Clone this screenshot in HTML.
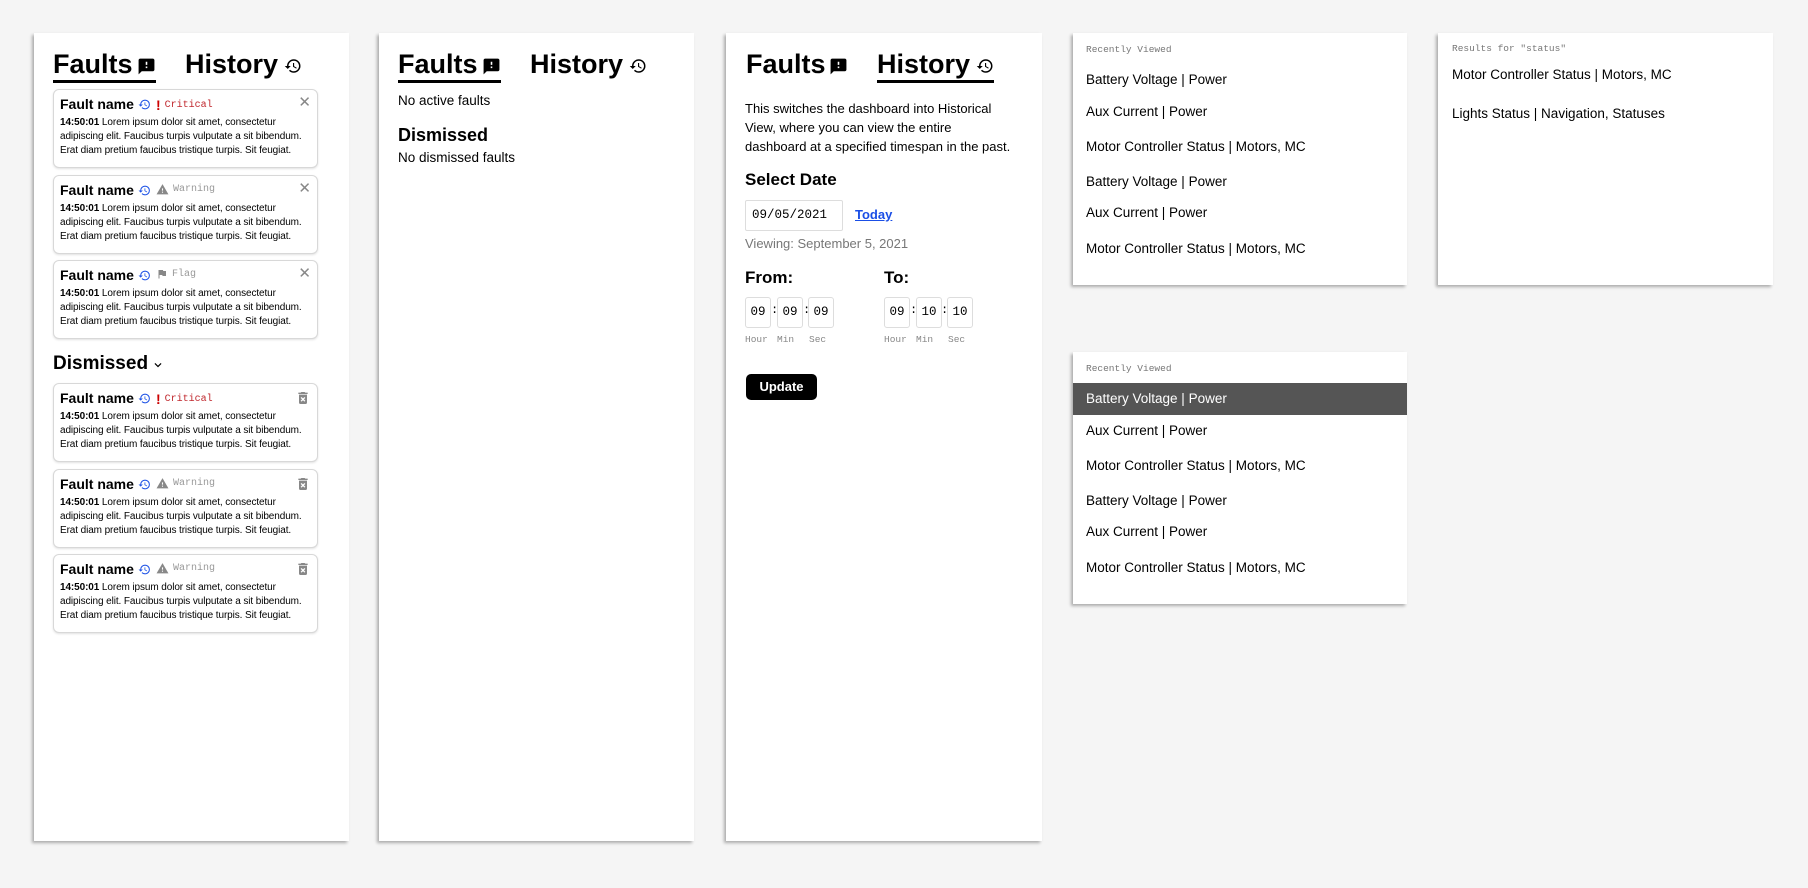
<!DOCTYPE html>
<html><head><meta charset="utf-8"><style>
*{margin:0;padding:0;box-sizing:border-box}
body{width:1808px;height:888px;background:#f5f5f5;position:relative;overflow:hidden;font-family:"Liberation Sans",sans-serif;color:#000}
.p{position:absolute;background:#fff;box-shadow:-2px 2px 3px rgba(0,0,0,.3)}
.a{position:absolute;white-space:nowrap}
.h{font-size:27px;font-weight:bold;line-height:32px}
.ul{position:absolute;height:3px;background:#000}
.card{position:absolute;left:53px;width:265px;height:79px;border:1px solid #d8d8d8;border-radius:6px;box-shadow:0 1px 2px rgba(0,0,0,.12);background:#fff}
.card .t{position:absolute;left:6px;top:6px;font-size:14px;font-weight:bold}
.card .b{position:absolute;left:6px;top:26px;width:256px;font-size:10px;line-height:14px;letter-spacing:-0.1px}
.card .hi{position:absolute;left:84px;top:8px}
.card .tag{position:absolute;left:102px;top:7px;font-family:"Liberation Mono",monospace;font-size:10px;display:flex;align-items:center;gap:4px}
.card .x{position:absolute;right:6px;top:3px;color:#888;font-size:15px}
.card .tr{position:absolute;right:6px;top:6px}
.mono{font-family:"Liberation Mono",monospace}
.row{position:absolute;left:13px;font-size:13.5px}
.lab{position:absolute;left:13px;font-family:"Liberation Mono",monospace;font-size:9.5px;color:#777}
.tb{position:absolute;top:297px;width:26px;height:31px;border:1px solid #ddd;border-radius:3px;font-family:"Liberation Mono",monospace;font-size:12.5px;text-align:center;line-height:29px}
.col{position:absolute;top:303px;font-family:"Liberation Mono",monospace;font-size:12px}
.tl{position:absolute;top:334px;font-family:"Liberation Mono",monospace;font-size:9.5px;color:#888}
</style></head><body>
<svg width="0" height="0" style="position:absolute"><defs>
<symbol id="hist" viewBox="0 0 24 24"><path d="M13 3a9 9 0 0 0-9 9H1l3.89 3.89.07.14L9 12H6c0-3.870 3.130-7 7-7s7 3.130 7 7-3.130 7-7 7c-1.930 0-3.680-.790-4.940-2.060l-1.420 1.420A8.954 8.954 0 0 0 13 21a9 9 0 0 0 0-18zm-1 5v5l4.280 2.540.720-1.210-3.500-2.080V8H12z"/></symbol>
<symbol id="fb" viewBox="0 0 24 24"><path d="M20 2H4c-1.1 0-1.990.9-1.990 2L2 22l4-4h14c1.1 0 2-.9 2-2V4c0-1.1-.9-2-2-2zm-7 12h-2v-2h2v2zm0-4h-2V6h2v4z"/></symbol>
<symbol id="warn" viewBox="0 0 24 24"><path d="M1 21h22L12 2 1 21zm12-3h-2v-2h2v2zm0-4h-2v-4h2v4z"/></symbol>
<symbol id="flag" viewBox="0 0 24 24"><path d="M14.4 6L14 4H5v17h2v-7h5.6l.4 2h7V6z"/></symbol>
<symbol id="del" viewBox="0 0 24 24"><path d="M6 19c0 1.1.9 2 2 2h8c1.1 0 2-.9 2-2V7H6v12zm2.460-7.120l1.410-1.410L12 12.590l2.120-2.120 1.410 1.410L13.410 14l2.120 2.120-1.410 1.410L12 15.410l-2.120 2.120-1.410-1.410L10.590 14l-2.130-2.120zM15.500 4l-1-1h-5l-1 1H5v2h14V4z"/></symbol>
</defs></svg>

<!-- Panel 1 -->
<div class="p" style="left:34px;top:33px;width:315px;height:808px"></div>
<div class="a h" style="left:53px;top:48px">Faults</div>
<svg class="a" style="left:137px;top:57px" width="19" height="19"><use href="#fb"/></svg>
<div class="ul" style="left:53px;top:80px;width:103px"></div>
<div class="a h" style="left:185px;top:48px">History</div>
<svg class="a" style="left:284px;top:57px" width="18" height="18"><use href="#hist"/></svg>

<div class="card" style="top:89px"><div class="t">Fault name</div><svg class="hi" width="13" height="13" fill="#2155e6"><use href="#hist"/></svg><div class="tag" style="color:#c0272d"><b style="font-family:'Liberation Sans';font-size:14px;color:#c00">!</b>Critical</div><div class="x">✕</div><div class="b"><b>14:50:01</b> Lorem ipsum dolor sit amet, consectetur adipiscing elit. Faucibus turpis vulputate a sit bibendum. Erat diam pretium faucibus tristique turpis. Sit feugiat.</div></div>
<div class="card" style="top:175px"><div class="t">Fault name</div><svg class="hi" width="13" height="13" fill="#2155e6"><use href="#hist"/></svg><div class="tag" style="color:#999"><svg width="13" height="13" fill="#888"><use href="#warn"/></svg>Warning</div><div class="x">✕</div><div class="b"><b>14:50:01</b> Lorem ipsum dolor sit amet, consectetur adipiscing elit. Faucibus turpis vulputate a sit bibendum. Erat diam pretium faucibus tristique turpis. Sit feugiat.</div></div>
<div class="card" style="top:260px"><div class="t">Fault name</div><svg class="hi" width="13" height="13" fill="#2155e6"><use href="#hist"/></svg><div class="tag" style="color:#999"><svg width="12" height="12" fill="#888"><use href="#flag"/></svg>Flag</div><div class="x">✕</div><div class="b"><b>14:50:01</b> Lorem ipsum dolor sit amet, consectetur adipiscing elit. Faucibus turpis vulputate a sit bibendum. Erat diam pretium faucibus tristique turpis. Sit feugiat.</div></div>

<div class="a" style="left:53px;top:353px;font-size:19px;font-weight:bold">Dismissed</div>
<svg class="a" style="left:151px;top:358px" width="14" height="14" viewBox="0 0 24 24"><path d="M7.41 8.59L12 13.17l4.59-4.58L18 10l-6 6-6-6z"/></svg>

<div class="card" style="top:383px"><div class="t">Fault name</div><svg class="hi" width="13" height="13" fill="#2155e6"><use href="#hist"/></svg><div class="tag" style="color:#c0272d"><b style="font-family:'Liberation Sans';font-size:14px;color:#c00">!</b>Critical</div><svg class="tr" width="16" height="16" fill="#888"><use href="#del"/></svg><div class="b"><b>14:50:01</b> Lorem ipsum dolor sit amet, consectetur adipiscing elit. Faucibus turpis vulputate a sit bibendum. Erat diam pretium faucibus tristique turpis. Sit feugiat.</div></div>
<div class="card" style="top:469px"><div class="t">Fault name</div><svg class="hi" width="13" height="13" fill="#2155e6"><use href="#hist"/></svg><div class="tag" style="color:#999"><svg width="13" height="13" fill="#888"><use href="#warn"/></svg>Warning</div><svg class="tr" width="16" height="16" fill="#888"><use href="#del"/></svg><div class="b"><b>14:50:01</b> Lorem ipsum dolor sit amet, consectetur adipiscing elit. Faucibus turpis vulputate a sit bibendum. Erat diam pretium faucibus tristique turpis. Sit feugiat.</div></div>
<div class="card" style="top:554px"><div class="t">Fault name</div><svg class="hi" width="13" height="13" fill="#2155e6"><use href="#hist"/></svg><div class="tag" style="color:#999"><svg width="13" height="13" fill="#888"><use href="#warn"/></svg>Warning</div><svg class="tr" width="16" height="16" fill="#888"><use href="#del"/></svg><div class="b"><b>14:50:01</b> Lorem ipsum dolor sit amet, consectetur adipiscing elit. Faucibus turpis vulputate a sit bibendum. Erat diam pretium faucibus tristique turpis. Sit feugiat.</div></div>

<!-- Panel 2 -->
<div class="p" style="left:379px;top:33px;width:315px;height:808px"></div>
<div class="a h" style="left:398px;top:48px">Faults</div>
<svg class="a" style="left:482px;top:57px" width="19" height="19"><use href="#fb"/></svg>
<div class="ul" style="left:398px;top:80px;width:103px"></div>
<div class="a h" style="left:530px;top:48px">History</div>
<svg class="a" style="left:629px;top:57px" width="18" height="18"><use href="#hist"/></svg>
<div class="a" style="left:398px;top:93px;font-size:13.5px">No active faults</div>
<div class="a" style="left:398px;top:125px;font-size:18px;font-weight:bold">Dismissed</div>
<div class="a" style="left:398px;top:150px;font-size:13.5px">No dismissed faults</div>

<!-- Panel 3 -->
<div class="p" style="left:726px;top:33px;width:316px;height:808px"></div>
<div class="a h" style="left:746px;top:48px">Faults</div>
<svg class="a" style="left:829px;top:57px" width="19" height="19"><use href="#fb"/></svg>
<div class="a h" style="left:877px;top:48px">History</div>
<svg class="a" style="left:976px;top:57px" width="18" height="18"><use href="#hist"/></svg>
<div class="ul" style="left:877px;top:80px;width:117px"></div>
<div class="a" style="left:745px;top:99px;font-size:13px;line-height:19px">This switches the dashboard into Historical<br>View, where you can view the entire<br>dashboard at a specified timespan in the past.</div>
<div class="a" style="left:745px;top:170px;font-size:17px;font-weight:bold">Select Date</div>
<div class="a mono" style="left:745px;top:200px;width:98px;height:31px;border:1px solid #ddd;border-radius:2px;font-size:12.5px;line-height:29px;padding-left:6px">09/05/2021</div>
<div class="a" style="left:855px;top:207px;font-size:13px;font-weight:bold;color:#1a4ee6;text-decoration:underline">Today</div>
<div class="a" style="left:745px;top:236px;font-size:13px;color:#777">Viewing: September 5, 2021</div>
<div class="a" style="left:745px;top:268px;font-size:17px;font-weight:bold">From:</div>
<div class="a" style="left:884px;top:268px;font-size:17px;font-weight:bold">To:</div>
<div class="tb" style="left:745px">09</div><div class="col" style="left:771px">:</div>
<div class="tb" style="left:777px">09</div><div class="col" style="left:803px">:</div>
<div class="tb" style="left:808px">09</div>
<div class="tb" style="left:884px">09</div><div class="col" style="left:910px">:</div>
<div class="tb" style="left:916px">10</div><div class="col" style="left:941px">:</div>
<div class="tb" style="left:947px">10</div>
<div class="tl" style="left:745px">Hour</div><div class="tl" style="left:777px">Min</div><div class="tl" style="left:809px">Sec</div>
<div class="tl" style="left:884px">Hour</div><div class="tl" style="left:916px">Min</div><div class="tl" style="left:948px">Sec</div>
<div class="a" style="left:746px;top:374px;width:71px;height:26px;background:#000;border-radius:5px;color:#fff;font-weight:bold;font-size:13px;text-align:center;line-height:26px">Update</div>

<!-- Panel 4 -->
<div class="p" style="left:1073px;top:33px;width:334px;height:252px">
<div class="lab" style="top:11px">Recently Viewed</div>
<div class="row" style="top:39px">Battery Voltage | Power</div>
<div class="row" style="top:71px">Aux Current | Power</div>
<div class="row" style="top:106px">Motor Controller Status | Motors, MC</div>
<div class="row" style="top:141px">Battery Voltage | Power</div>
<div class="row" style="top:172px">Aux Current | Power</div>
<div class="row" style="top:208px">Motor Controller Status | Motors, MC</div>
</div>
<!-- Panel 5 -->
<div class="p" style="left:1438px;top:33px;width:335px;height:252px">
<div class="lab" style="top:10px;left:14px">Results for "status"</div>
<div class="row" style="top:34px;left:14px">Motor Controller Status | Motors, MC</div>
<div class="row" style="top:73px;left:14px">Lights Status | Navigation, Statuses</div>
</div>
<!-- Panel 6 -->
<div class="p" style="left:1073px;top:352px;width:334px;height:252px">
<div class="lab" style="top:11px">Recently Viewed</div>
<div style="position:absolute;left:0;top:31px;width:334px;height:32px;background:#555"></div>
<div class="row" style="top:39px;color:#fff">Battery Voltage | Power</div>
<div class="row" style="top:71px">Aux Current | Power</div>
<div class="row" style="top:106px">Motor Controller Status | Motors, MC</div>
<div class="row" style="top:141px">Battery Voltage | Power</div>
<div class="row" style="top:172px">Aux Current | Power</div>
<div class="row" style="top:208px">Motor Controller Status | Motors, MC</div>
</div>
</body></html>
